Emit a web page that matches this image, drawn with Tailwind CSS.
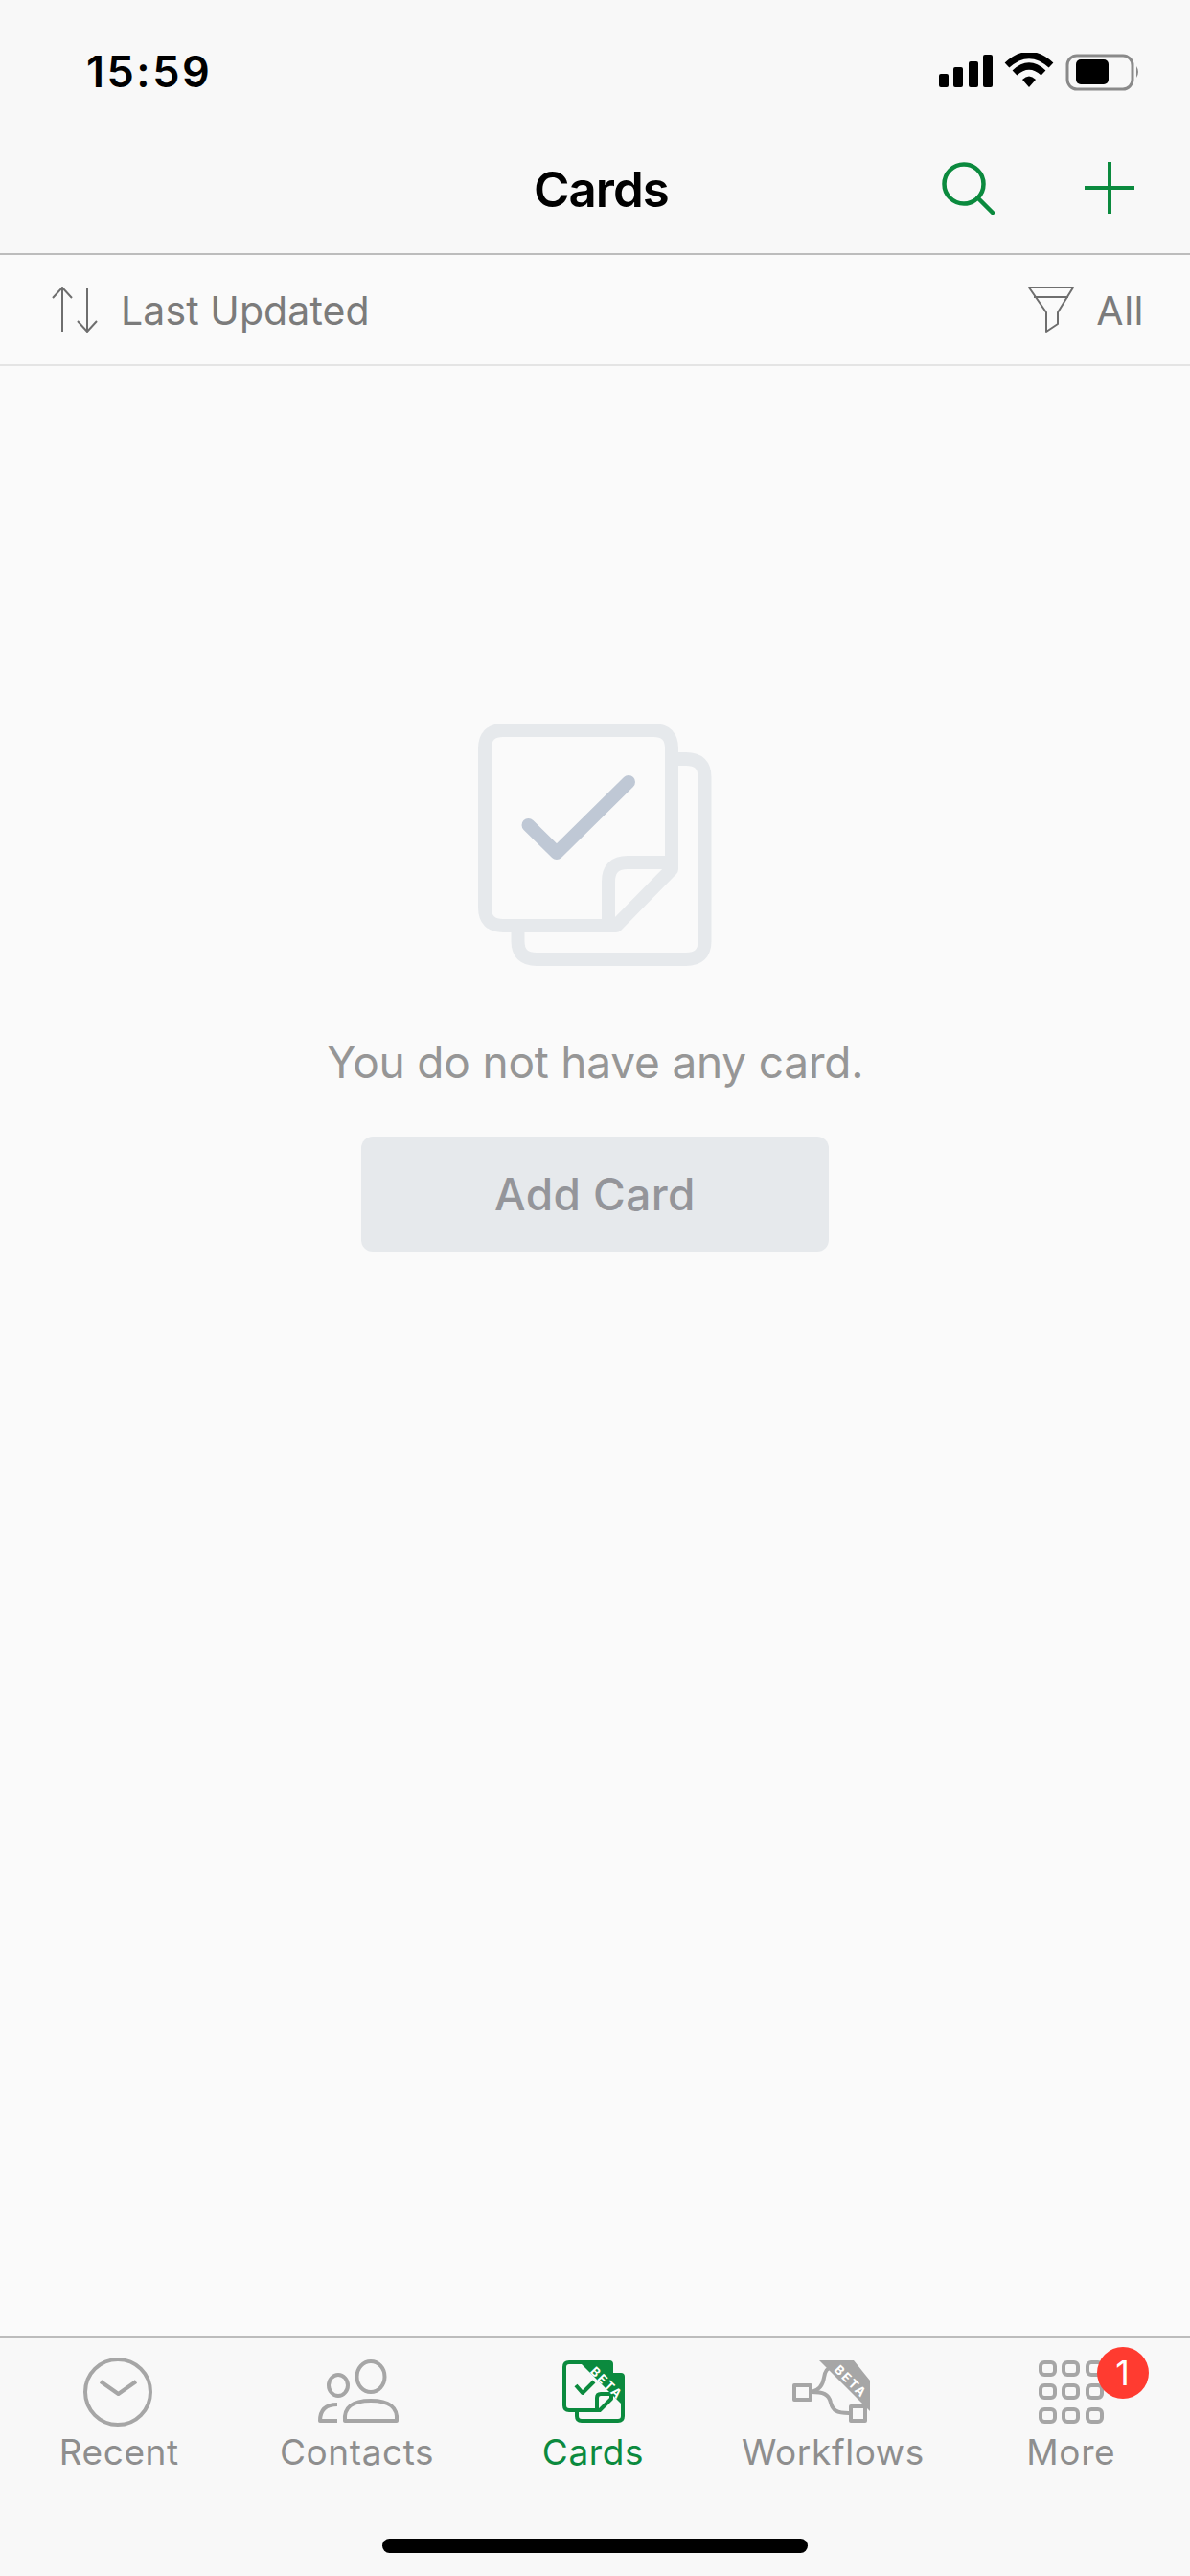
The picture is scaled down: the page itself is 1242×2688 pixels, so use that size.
<!DOCTYPE html>
<html>
<head>
<meta charset="utf-8">
<script src="https://cdn.jsdelivr.net/npm/@tailwindcss/browser@4"></script>
</head>
<body>
<div class="w-[1242px] h-[2688px] flex flex-col bg-[#fafafa] font-[Inter,sans-serif] overflow-hidden">
  <!-- status bar -->
  <div class="h-[132px] shrink-0 bg-[#f8f8f8] flex items-start justify-between pl-[90px] pr-[52px] pt-[55px]">
    <span class="text-[45px] leading-[40px] font-semibold text-black tracking-[2.5px]">15:59</span>
    <svg class="w-[210px] h-[40px]" viewBox="0 0 210 40">
      <rect x="0" y="22" width="10" height="14" rx="2"/>
      <rect x="15" y="15" width="10" height="21" rx="2"/>
      <rect x="31" y="9" width="10" height="27" rx="2"/>
      <rect x="46" y="2" width="10" height="34" rx="2"/>
      <path d="M71 13 Q94 -8 117 13" fill="none" stroke="#000" stroke-width="7"/>
      <path d="M79 21 Q94 7 109 21" fill="none" stroke="#000" stroke-width="7"/>
      <path d="M87 28 Q94 21 101 28 L94 36 Z" fill="#000"/>
      <rect x="134" y="3" width="68" height="35" rx="10" fill="none" stroke="#8a8a8a" stroke-width="3"/>
      <rect x="143" y="7" width="34" height="26" rx="5" fill="#000"/>
      <path d="M206 14 Q210 20 206 26 Z" fill="#8a8a8a"/>
    </svg>
  </div>
  <!-- nav bar -->
  <div class="h-[134px] shrink-0 bg-[#f8f8f8] border-b-2 border-[#bcbcbc] flex items-start pl-[557px] pr-[58px] pt-[37px]">
    <span class="text-[51px] leading-[56px] font-semibold text-black tracking-[-1px] mt-[1px]">Cards</span>
    <div class="ml-auto flex gap-[94px]">
      <svg class="w-[55px] h-[55px]" viewBox="0 0 55 55" fill="none" stroke="#0b8a3e" stroke-width="4.5">
        <circle cx="23" cy="23" r="20.5"/>
        <path d="M37.5 37.5 L53 53" stroke-linecap="round"/>
      </svg>
      <svg class="w-[52px] h-[54px]" viewBox="0 0 52 54" fill="none" stroke="#0b8a3e" stroke-width="4">
        <path d="M26 0 V54 M0 27 H52"/>
      </svg>
    </div>
  </div>
  <!-- filter row -->
  <div class="h-[116px] shrink-0 bg-[#fafafa] border-b-2 border-[#e4e4e4] flex items-center pl-[54px] pr-[48px]">
    <svg class="w-[48px] h-[48px]" viewBox="0 0 48 48" fill="none" stroke="#6e6e6e" stroke-width="2">
      <path d="M11 47 V1 M1 12 L11 1 L21 12"/>
      <path d="M37 2 V47 M27 36 L37 47 L47 36"/>
    </svg>
    <span class="ml-[24px] mt-[2px] text-[41px] leading-[48px] text-[#7b7b7b] tracking-[0.1px]">Last Updated</span>
    <svg class="ml-auto w-[48px] h-[48px]" viewBox="0 0 48 48" fill="none" stroke="#6e6e6e" stroke-width="2" stroke-linejoin="round">
      <path d="M1 1 H47 L31 27 V39 L19 47 V27 Z"/>
      <path d="M6 11 H42"/>
    </svg>
    <span class="ml-[23px] mt-[2px] text-[41px] leading-[48px] text-[#7b7b7b] tracking-[0.5px]">All</span>
  </div>
  <!-- empty state -->
  <main class="flex-1 flex flex-col items-center pt-[373px]">
    <svg class="w-[260px] h-[253px]" viewBox="491 755 260 253" fill="none" stroke-linejoin="round">
      <path d="M708 792 H716 Q735.5 792 735.5 811 V982 Q735.5 1001 716 1001 H560 Q540.5 1001 540.5 982 V973" stroke="#e6e9ec" stroke-width="14"/>
      <path d="M643 966 H525 Q506 966 506 947 V781 Q506 762 525 762 H682 Q701 762 701 781 V907 Z" stroke="#e6e9ec" stroke-width="14"/>
      <path d="M701 900 H655 Q635 900 635 920 V966" stroke="#e6e9ec" stroke-width="14"/>
      <path d="M551.5 861 L581 890 L656 816" stroke="#bfc8d5" stroke-width="14" stroke-linecap="round"/>
    </svg>
    <p class="mt-[72px] text-[46px] leading-[56px] text-[#969696] tracking-[-0.2px]">You do not have any card.</p>
    <button class="mt-[50px] w-[488px] h-[120px] rounded-[12px] bg-[#e6e9ec] text-[46px] font-medium text-[#94959a] tracking-[0.4px] flex items-center justify-center">Add Card</button>
  </main>
  <!-- tab bar -->
  <nav class="relative h-[250px] shrink-0 bg-[#f8f8f8] border-t-2 border-[#bcbcbc] grid grid-cols-5 items-start pt-[20px]">
    <div class="flex flex-col items-center gap-[5px] text-[#8e8e8e]">
      <svg class="w-[100px] h-[72px]" viewBox="0 0 100 72" fill="none" stroke="#a6a6a6" stroke-width="4" stroke-linejoin="round">
        <circle cx="49" cy="36" r="34"/>
        <path d="M31 25 L49.5 38 L68 25"/>
      </svg>
      <span class="text-[37px] leading-[44px] tracking-[0.6px]">Recent</span>
    </div>
    <div class="flex flex-col items-center gap-[5px] text-[#8e8e8e]">
      <svg class="w-[100px] h-[72px]" viewBox="0 0 100 72" fill="none" stroke="#a6a6a6" stroke-width="4" stroke-linejoin="round">
        <ellipse cx="64" cy="20" rx="14.5" ry="16"/>
        <ellipse cx="30" cy="29" rx="10" ry="11"/>
        <path d="M37 66 Q35 45 64 45 Q93 45 91 66 Q91 66 88 66 H40 Q37 66 37 66 Z"/>
        <path d="M29 49 Q11 49 11 66 H29"/>
      </svg>
      <span class="text-[37px] leading-[44px] tracking-[0.6px]">Contacts</span>
    </div>
    <div class="flex flex-col items-center gap-[5px] text-[#0b8a3e]">
      <svg class="w-[100px] h-[72px]" viewBox="0 0 100 72" fill="none" stroke="#0b8a3e" stroke-width="4" stroke-linejoin="round">
        <path d="M69 18 H74 Q79 18 79 23 V61 Q79 66 74 66 H36 Q31 66 31 61 V55"/>
        <path d="M55 55 H23 Q18 55 18 50 V10 Q18 5 23 5 H62 Q67 5 67 10 V43 Z"/>
        <path d="M67 38 H56 Q52 38 52 42 V55"/>
        <path d="M30 29 L37 37 L49 25"/>
        <path d="M32 3 H65 Q69 3 69 7 V16 H77 Q81 16 81 20 V52 Z" fill="#0b8a3e" stroke="none"/>
        <text x="0" y="0" transform="translate(59 30) rotate(45)" text-anchor="middle" fill="#fff" stroke="none" font-size="13" font-weight="700" letter-spacing="2">BETA</text>
      </svg>
      <span class="text-[37px] leading-[44px] tracking-[0.6px] ml-[-4px]">Cards</span>
    </div>
    <div class="flex flex-col items-center gap-[5px] text-[#8e8e8e]">
      <svg class="w-[100px] h-[72px]" viewBox="0 0 100 72" fill="none" stroke="#a6a6a6" stroke-width="4" stroke-linejoin="round">
        <rect x="10" y="29" width="17" height="15"/>
        <rect x="69" y="51" width="15" height="15"/>
        <path d="M28 36 C40 36 46 38 48 47 C50 55 54 58 67 58"/>
        <path d="M28 36 C36 34 40 28 41 21 C42 14 44 11 49 10"/>
        <path d="M36 3 H72 L89 24 V56 Z" fill="#a6a6a6" stroke="none"/>
        <text x="0" y="0" transform="translate(65.7 28.3) rotate(45)" text-anchor="middle" fill="#fff" stroke="none" font-size="13" font-weight="700" letter-spacing="2">BETA</text>
      </svg>
      <span class="text-[37px] leading-[44px] tracking-[0.6px]">Workflows</span>
    </div>
    <div class="relative flex flex-col items-center gap-[5px] text-[#8e8e8e]">
      <svg class="w-[100px] h-[72px]" viewBox="0 0 100 72" fill="none" stroke="#a6a6a6" stroke-width="4">
        <rect x="18" y="5" width="15" height="13" rx="4"/><rect x="42" y="5" width="15" height="13" rx="4"/><rect x="67" y="5" width="15" height="13" rx="4"/>
        <rect x="18" y="29" width="15" height="13" rx="4"/><rect x="42" y="29" width="15" height="13" rx="4"/><rect x="67" y="29" width="15" height="13" rx="4"/>
        <rect x="18" y="54" width="15" height="13" rx="4"/><rect x="42" y="54" width="15" height="13" rx="4"/><rect x="67" y="54" width="15" height="13" rx="4"/>
      </svg>
      <span class="text-[37px] leading-[44px] tracking-[0.6px]">More</span>
      <span class="absolute left-[151px] top-[-11px] w-[54px] h-[54px] rounded-full bg-[#ff3b30] text-white text-[36px] leading-[54px] text-center">1</span>
    </div>
    <div class="absolute left-[399px] top-[209px] w-[444px] h-[15px] rounded-full bg-black"></div>
  </nav>
</div>
</body>
</html>
